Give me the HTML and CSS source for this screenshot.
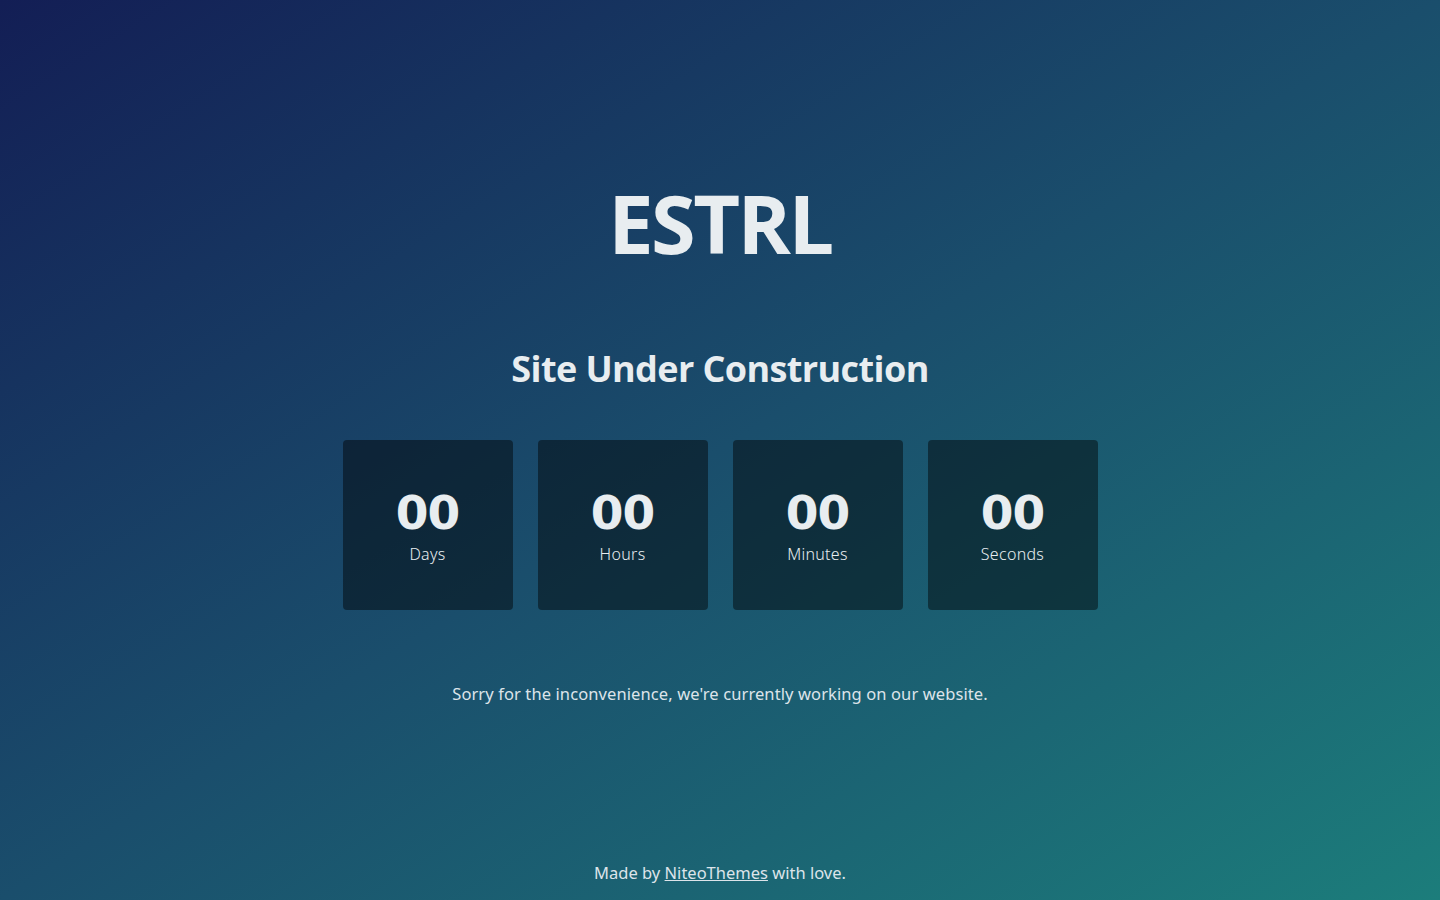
FILE: index.html
```html
<!DOCTYPE html>
<html lang="en">
<head>
<meta charset="utf-8">
<title>ESTRL - Site Under Construction</title>
<link rel="stylesheet" href="styles.css">
</head>
<body>
<div class="page">
  <main class="main">
    <h1 class="logo">ESTRL</h1>
    <h2 class="title">Site Under Construction</h2>
    <div class="timer">
      <div class="box"><span class="num">00</span><span class="label">Days</span></div>
      <div class="box"><span class="num">00</span><span class="label">Hours</span></div>
      <div class="box"><span class="num">00</span><span class="label">Minutes</span></div>
      <div class="box"><span class="num">00</span><span class="label">Seconds</span></div>
    </div>
    <p class="message">Sorry for the inconvenience, we're currently working on our website.</p>
  </main>
  <footer class="footer">Made by <a href="#">NiteoThemes</a> with love.</footer>
</div>
</body>
</html>
```

FILE: styles.css
```css
html, body {
  margin: 0;
  padding: 0;
  height: 100%;
}
body {
  background: linear-gradient(to bottom right, #131e55 0%, #1a4e6c 50%, #1c7d7b 100%);
  color: #e8edf0;
  font-family: "Noto Sans", "Open Sans", sans-serif;
}
.page {
  height: 900px;
  display: flex;
  flex-direction: column;
  align-items: center;
}
.main {
  display: flex;
  flex-direction: column;
  align-items: center;
  padding-top: 178px;
}
.logo {
  margin: 0;
  font-family: "Open Sans", sans-serif;
  font-weight: 700;
  font-size: 81px;
  line-height: 90px;
  letter-spacing: -2.5px;
}
.title {
  margin: 76px 0 0;
  font-family: "Open Sans", sans-serif;
  font-weight: 700;
  font-size: 36px;
  line-height: 50px;
  letter-spacing: -0.6px;
}
.timer {
  display: flex;
  gap: 25px;
  margin-top: 46px;
}
.box {
  width: 170px;
  height: 170px;
  border-radius: 4px;
  background: rgba(0, 0, 0, 0.45);
  display: flex;
  flex-direction: column;
  align-items: center;
  justify-content: flex-start;
}
.num {
  font-family: "DejaVu Sans", sans-serif;
  font-weight: 700;
  font-size: 47px;
  line-height: 44px;
  margin-top: 51px;
  letter-spacing: -1px;
}
.label {
  font-size: 16px;
  line-height: 22px;
  margin-top: 8px;
  letter-spacing: 0.3px;
  font-weight: 300;
}
.message {
  margin: 72px 0 0;
  font-size: 16.5px;
  line-height: 24px;
  letter-spacing: 0.1px;
  color: #dde4ea;
}
.footer {
  margin-top: auto;
  padding-bottom: 15px;
  font-size: 16.5px;
  line-height: 24px;
  letter-spacing: 0px;
  color: #dde4ea;
}
.footer a {
  color: #dde4ea;
}
```
